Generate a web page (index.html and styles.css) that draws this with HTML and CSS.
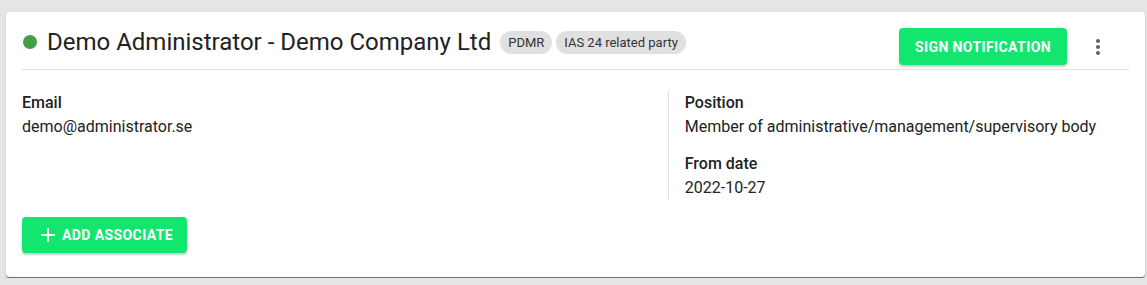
FILE: index.html
```html
<!DOCTYPE html>
<html lang="en">
<head>
  <meta charset="UTF-8" />
  <title>Insider - Demo Administrator</title>
  <link rel="stylesheet" href="styles.css">
</head>
<body>

  <!-- Insider card -->
  <div class="card">
    <div class="card-header">
      <div class="title-row">
        <span class="status-dot"></span>
        <h1>Demo Administrator - Demo Company Ltd</h1>
        <span class="chip">PDMR</span>
        <span class="chip">IAS 24 related party</span>
      </div>
      <div class="actions">
        <button class="btn">Sign notification</button>
        <button class="icon-btn" aria-label="More">
          <svg width="24" height="24" viewBox="0 0 24 24">
            <path fill="#616161" d="M12 8c1.1 0 2-.9 2-2s-.9-2-2-2-2 .9-2 2 .9 2 2 2zm0 2c-1.1 0-2 .9-2 2s.9 2 2 2 2-.9 2-2-.9-2-2-2zm0 6c-1.1 0-2 .9-2 2s.9 2 2 2 2-.9 2-2-.9-2-2-2z"/>
          </svg>
        </button>
      </div>
    </div>

    <div class="details">
      <div class="col">
        <div class="field">
          <div class="label">Email</div>
          <div class="value">demo@administrator.se</div>
        </div>
      </div>
      <div class="col col-right">
        <div class="field">
          <div class="label">Position</div>
          <div class="value">Member of administrative/management/supervisory body</div>
        </div>
        <div class="field">
          <div class="label">From date</div>
          <div class="value">2022-10-27</div>
        </div>
      </div>
    </div>

    <button class="btn btn-icon">
      <svg width="20" height="20" viewBox="0 0 20 20">
        <path d="M10 3v14M3 10h14" stroke="#fff" stroke-width="2" fill="none"/>
      </svg>
      Add associate
    </button>
  </div>

</body>
</html>
```

FILE: styles.css
```css
body {
  font-family: Roboto, "Liberation Sans", Arial, sans-serif;
  margin: 0;
  padding: 12px 2px 0 6px;
  background-color: #e5e5e5;
  color: #222;
}

.card {
  background-color: #fff;
  border-radius: 4px;
  border-bottom: 1px solid #1f9d55;
  box-shadow: 0 1px 2px rgba(0, 0, 0, 0.2);
  padding: 16px 16px 24px 16px;
}

.card-header {
  display: flex;
  justify-content: space-between;
  align-items: flex-start;
  padding-bottom: 4px;
  border-bottom: 1px solid #e0e0e0;
}

.title-row {
  display: flex;
  align-items: center;
  height: 28px;
}

.status-dot {
  width: 14px;
  height: 14px;
  border-radius: 50%;
  background-color: #43a047;
  margin: 0 10px 0 1px;
}

h1 {
  font-size: 24px;
  font-weight: 400;
  margin: 0 9px 0 0;
  line-height: 28px;
}

.chip {
  background-color: #e0e0e0;
  color: #333;
  font-size: 13px;
  height: 23px;
  line-height: 23px;
  padding: 0 8px;
  border-radius: 12px;
  margin-right: 4px;
}

.actions {
  display: flex;
  align-items: center;
  gap: 11px;
  margin-right: 11px;
}

.btn {
  font-family: inherit;
  font-size: 14px;
  font-weight: 700;
  letter-spacing: 0.4px;
  text-transform: uppercase;
  color: #fff;
  background-color: #13e66f;
  border: none;
  border-radius: 4px;
  height: 37px;
  padding: 0 16px;
  box-shadow: 0 2px 2px rgba(0, 0, 0, 0.2);
  cursor: pointer;
}

.icon-btn {
  display: flex;
  align-items: center;
  justify-content: center;
  width: 40px;
  height: 37px;
  border: none;
  background: none;
  padding: 0;
  cursor: pointer;
}

.details {
  display: grid;
  grid-template-columns: 7fr 5fr;
  margin-top: 21px;
}

.col-right {
  border-left: 1px solid #e0e0e0;
  padding-left: 16px;
}

.field + .field {
  margin-top: 13px;
}

.label {
  font-size: 16px;
  font-weight: 500;
  line-height: 24px;
}

.value {
  font-size: 16px;
  line-height: 24px;
}

.btn-icon {
  display: flex;
  align-items: center;
  height: 36px;
  margin-top: 17px;
  padding-right: 14px;
}

.btn-icon svg {
  margin-right: 4px;
}
```
